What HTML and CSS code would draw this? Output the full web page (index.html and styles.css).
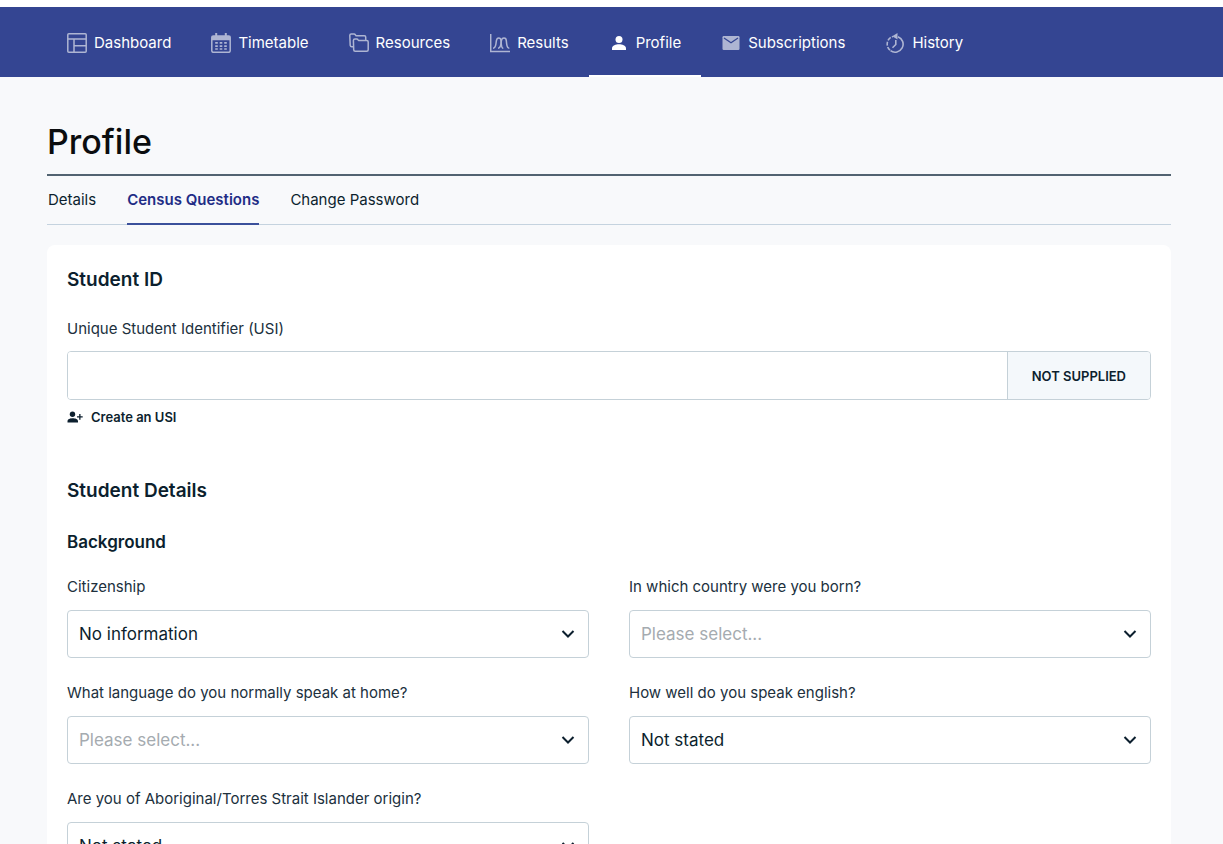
FILE: index.html
```html
<!DOCTYPE html>
<html lang="en">
<head>
<meta charset="utf-8">
<meta name="viewport" content="width=device-width, initial-scale=1">
<title>Profile</title>
<link rel="stylesheet" href="styles.css">
</head>
<body>
<header class="topbar">
  <nav class="nav" aria-label="Main">
    <a class="nav-item" href="#dashboard">
      <svg class="nav-icon" viewBox="0 0 20 20" fill="none" stroke="currentColor" stroke-width="1.500"><rect x=".8" y=".8" width="18.400" height="18.400" rx="1"/><path d="M.8 6h18.400M7 6v13.200M7 12.700h12.200"/></svg>
      <span>Dashboard</span>
    </a>
    <a class="nav-item" href="#timetable">
      <svg class="nav-icon" viewBox="0 0 20 20"><rect x=".8" y="3.100" width="18.400" height="16.200" rx="1.500" fill="none" stroke="currentColor" stroke-width="1.500"/><path fill="currentColor" d="M.8 3.100h3.400V0h2v3.100h7.600V0h2v3.100h3.400v4.100H.8zM4.200 9h2.600v1.700H4.200zM8.700 9h2.600v1.700H8.700zM13.200 9h2.600v1.700h-2.600zM4.200 12.200h2.600v1.700H4.200zM8.700 12.200h2.600v1.700H8.700zM13.200 12.200h2.600v1.700h-2.600zM4.200 15.300h2.600v1.500H4.200zM8.700 15.300h2.600v1.500H8.700zM13.200 15.300h2.600v1.500h-2.600z"/></svg>
      <span>Timetable</span>
    </a>
    <a class="nav-item" href="#resources">
      <svg class="nav-icon" viewBox="0 0 20 20" fill="none" stroke="currentColor" stroke-width="1.500" stroke-linejoin="round" stroke-linecap="round"><path d="M3.800 13.700H2.800Q1.400 13.700 1.200 12.300L.8 2.500Q.8.900 2.200.9h2.800q.9 0 1.400.9l.5.900h8.500q1.300 0 1.300 1.300v2.500"/><path d="M4.400 7.500q0-1.500 1.500-1.500h1.900q.9 0 1.300.8l.4.700h8.200q1.500 0 1.500 1.500v7.700q0 1.500-1.500 1.500H6.200q-1.500 0-1.500-1.500z"/></svg>
      <span>Resources</span>
    </a>
    <a class="nav-item" href="#results">
      <svg class="nav-icon" viewBox="0 0 20 20" fill="none" stroke="currentColor" stroke-width="1.500"><path d="M.7 1v17.600H20"/><path d="M3 15.200c2 0 2.500-1.500 2.900-4l.5-3.500Q6.800 5 8.800 5t2.200 2.700l.3 3.500c.2 2.500.6 4 2 4"/><path d="M8 15.200c2 0 2.500-1.500 2.900-4l.5-3.500Q11.800 5 14 5t2.300 2.700l.4 3.500c.3 2.500.8 4 2.600 4"/></svg>
      <span>Results</span>
    </a>
    <a class="nav-item is-active" href="#profile" aria-current="page">
      <svg class="nav-icon" viewBox="0 0 20 20" fill="currentColor"><circle cx="10" cy="6.500" r="3.500"/><path d="M3 17v-1.700C3 12.700 7 11.300 10 11.300s7 1.400 7 4V17z"/></svg>
      <span>Profile</span>
    </a>
    <a class="nav-item" href="#subscriptions">
      <svg class="nav-icon" viewBox="0 0 20 20"><rect x="1.500" y="3" width="17" height="14" rx="1.200" fill="currentColor"/><path class="envelope-fold" d="M3 5l7 4.700L17 5"/></svg>
      <span>Subscriptions</span>
    </a>
    <a class="nav-item" href="#history">
      <svg class="nav-icon" viewBox="0 0 20 20" fill="none" stroke="currentColor" stroke-width="1.600"><path d="M13 3.700a8 8 0 1 1-7.500 14"/><path d="M5 17.200A8 8 0 0 1 8 3.400" stroke-dasharray="4 1.300"/><path d="M10.800 7v4.500L7.500 14.800"/><path d="M7.200 3.200L12.500 0v6.500z" fill="currentColor" stroke="none"/></svg>
      <span>History</span>
    </a>
  </nav>
</header>

<main class="page">
  <h1 class="page-title">Profile</h1>
  <nav class="tabs" aria-label="Profile sections">
    <a class="tab" href="#details">Details</a>
    <a class="tab is-current" href="#census" aria-current="page">Census Questions</a>
    <a class="tab" href="#password">Change Password</a>
  </nav>

  <form class="card">
    <section class="student-id">
      <h2 class="section-title">Student ID</h2>
      <div class="field">
        <label class="label" for="usi">Unique Student Identifier (USI)</label>
        <div class="input-group">
          <input class="input" id="usi" type="text">
          <span class="status">NOT SUPPLIED</span>
        </div>
      </div>
      <a class="create-link" href="#create-usi">
        <svg class="create-icon" viewBox="0 0 16 16" fill="currentColor"><circle cx="5.500" cy="5.300" r="2.700"/><path d="M.5 13.500v-1.300C.5 10 3.500 9.200 5.800 9.200s5.200.8 5.200 3v1.300zM12.200 5h1.300v2.200h2.200v1.300h-2.200v2.200h-1.300V8.500H10V7.200h2.200z"/></svg>
        <span>Create an USI</span>
      </a>
    </section>

    <section>
      <h2 class="section-title">Student Details</h2>
      <h3 class="group-title">Background</h3>
      <div class="fields">
        <div class="field">
          <label class="label" for="citizenship">Citizenship</label>
          <div class="select-box">
            <select class="select" id="citizenship"><option>No information</option></select>
            <svg class="chevron" viewBox="0 0 14 14"><path d="M1.500 4l5.500 5.500L12.500 4"/></svg>
          </div>
        </div>
        <div class="field">
          <label class="label" for="country">In which country were you born?</label>
          <div class="select-box">
            <select class="select is-empty" id="country"><option>Please select...</option></select>
            <svg class="chevron" viewBox="0 0 14 14"><path d="M1.500 4l5.500 5.500L12.500 4"/></svg>
          </div>
        </div>
        <div class="field">
          <label class="label" for="language">What language do you normally speak at home?</label>
          <div class="select-box">
            <select class="select is-empty" id="language"><option>Please select...</option></select>
            <svg class="chevron" viewBox="0 0 14 14"><path d="M1.500 4l5.500 5.500L12.500 4"/></svg>
          </div>
        </div>
        <div class="field">
          <label class="label" for="english">How well do you speak english?</label>
          <div class="select-box">
            <select class="select" id="english"><option>Not stated</option></select>
            <svg class="chevron" viewBox="0 0 14 14"><path d="M1.500 4l5.500 5.500L12.500 4"/></svg>
          </div>
        </div>
        <div class="field">
          <label class="label" for="origin">Are you of Aboriginal/Torres Strait Islander origin?</label>
          <div class="select-box">
            <select class="select" id="origin"><option>Not stated</option></select>
            <svg class="chevron" viewBox="0 0 14 14"><path d="M1.500 4l5.500 5.500L12.500 4"/></svg>
          </div>
        </div>
      </div>
    </section>
  </form>
</main>
</body>
</html>
```
FILE: styles.css
```css
:root {
  --brand: #344592;
  --ink: #0c1f2e;
  --line: #c5d1d8;
  --page: #f8f9fb;
}

* { box-sizing: border-box; }

body {
  margin: 0;
  background: var(--page);
  color: var(--ink);
  font: 15px/20px Inter, "Liberation Sans", sans-serif;
}

a { color: inherit; text-decoration: none; }

.topbar {
  background: var(--brand);
  border-top: 7px solid #fff;
}

.nav {
  display: flex;
  padding: 0 47px;
}

.nav-item {
  display: flex;
  align-items: center;
  gap: 7px;
  height: 70px;
  padding: 4px 20px 0;
  border-bottom: 2px solid transparent;
  color: #fff;
}

.nav-item.is-active { border-bottom-color: #fff; }

.nav-icon {
  width: 20px;
  height: 20px;
  color: #aeb5d3;
}

.is-active .nav-icon { color: #fff; }

.envelope-fold {
  fill: none;
  stroke: var(--brand);
  stroke-width: 1.3;
}

.page { padding: 43px 52px 40px 47px; }

.page-title {
  margin: 0;
  padding-bottom: 10px;
  border-bottom: 2px solid #526371;
  color: #0b0d0f;
  font-size: 34px;
  line-height: 44px;
  font-weight: 500;
}

.tabs {
  display: flex;
  gap: 31px;
  padding-left: 1px;
  border-bottom: 1px solid #c5d3df;
}

.tab {
  margin-bottom: -1px;
  padding: 14px 0 13px;
  border-bottom: 2px solid transparent;
}

.tab.is-current {
  border-bottom-color: #3b509b;
  color: #1f2d86;
  font-weight: 600;
}

.card {
  margin-top: 20px;
  padding: 21px 20px;
  border-radius: 8px;
  background: #fff;
}

.student-id { margin-bottom: 47px; }

.section-title {
  margin: 0;
  font-size: 19px;
  line-height: 28px;
  font-weight: 600;
}

.student-id .section-title { margin-bottom: 25px; }

.group-title {
  margin: 25px 0 23px;
  font-size: 17px;
  line-height: 24px;
  font-weight: 600;
}

.fields {
  display: grid;
  grid-template-columns: 1fr 1fr;
  gap: 25px 40px;
}

.field {
  display: grid;
  gap: 13px;
}

.student-id .field { gap: 12px; }

.label { color: #20303d; }

.input-group {
  display: flex;
  height: 49px;
  border: 1px solid var(--line);
  border-radius: 4px;
  overflow: hidden;
}

.input {
  flex: 1;
  min-width: 0;
  padding: 0 12px;
  border: 0;
  background: #fff;
  font: inherit;
}

.status {
  display: flex;
  align-items: center;
  padding: 0 24px;
  border-left: 1px solid var(--line);
  background: #f4f8fb;
  font-size: 13px;
  font-weight: 600;
}

.create-link {
  display: inline-flex;
  align-items: center;
  gap: 8px;
  margin-top: 7px;
  font-size: 13px;
  font-weight: 600;
}

.create-icon {
  width: 16px;
  height: 16px;
}

.select-box {
  display: grid;
  align-items: center;
}

.select {
  grid-area: 1 / 1;
  width: 100%;
  height: 48px;
  padding: 0 44px 0 11px;
  appearance: none;
  border: 1px solid var(--line);
  border-radius: 4px;
  background: #fff;
  color: var(--ink);
  font: 17px/24px Inter, "Liberation Sans", sans-serif;
}

.select.is-empty { color: #a5abb0; }

.chevron {
  grid-area: 1 / 1;
  justify-self: end;
  width: 14px;
  height: 14px;
  margin-right: 14px;
  fill: none;
  stroke: var(--ink);
  stroke-width: 2;
  pointer-events: none;
}
```
